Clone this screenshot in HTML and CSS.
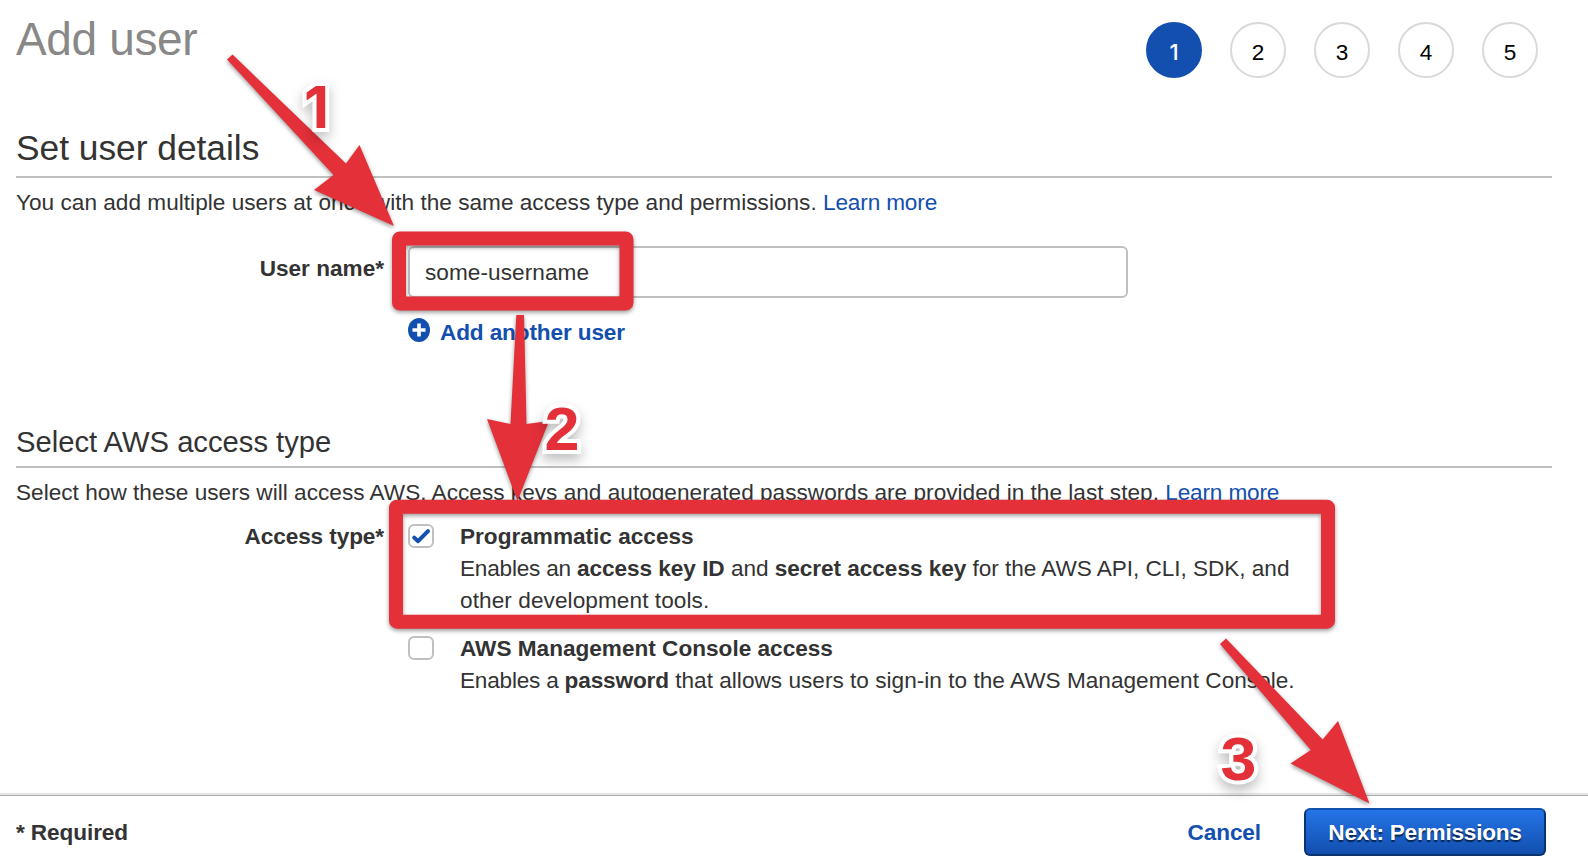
FILE: index.html
```html
<!DOCTYPE html>
<html lang="en">
<head>
<meta charset="utf-8">
<title>Add user</title>
<link rel="stylesheet" href="styles.css">
</head>
<body>
<header class="header">
  <h1 class="title"><span>Add user</span></h1>
  <ol class="steps">
    <li class="step step-active">1</li>
    <li class="step">2</li>
    <li class="step">3</li>
    <li class="step">4</li>
    <li class="step">5</li>
  </ol>
</header>
<main class="content">
  <section class="section">
    <h2 class="heading">Set user details</h2>
    <p class="intro">You can add multiple users at once with the same access type and permissions. <a class="link">Learn more</a></p>
    <div class="row row-user">
      <label class="label label-user" for="username">User name*</label>
      <div>
        <input class="input" id="username" type="text" value="some-username">
        <a class="add">
          <svg class="add-icon" viewBox="0 0 22 24"><ellipse cx="11" cy="12" rx="11" ry="12" fill="#124fae"/><path d="M11 5.5v13M4.5 12h13" stroke="#fff" stroke-width="3.6"/></svg>
          <span>Add another user</span>
        </a>
      </div>
    </div>
  </section>
  <section class="section section-access">
    <h3 class="subheading">Select AWS access type</h3>
    <p class="intro">Select how these users will access AWS. Access keys and autogenerated passwords are provided in the last step. <a class="link">Learn more</a></p>
    <div class="row row-access">
      <span class="label label-access">Access type*</span>
      <div class="options">
        <div class="option">
          <span class="checkbox"><svg class="check" viewBox="0 0 26 24"><path d="M6.2 13.6l3.9 3.6L20 7.2" fill="none" stroke="#124fae" stroke-width="4" stroke-linecap="round" stroke-linejoin="round"/></svg></span>
          <div>
            <div class="option-title">Programmatic access</div>
            <div class="option-text text-prog"><span class="lead">Enables an </span><b>access key ID</b> and <b>secret access key</b> for the AWS API, CLI, SDK, and</div>
            <div class="option-text text-tools">other development tools.</div>
          </div>
        </div>
        <div class="option">
          <span class="checkbox"></span>
          <div>
            <div class="option-title">AWS Management Console access</div>
            <div class="option-text text-console"><span class="lead">Enables a </span><b class="password">password</b> that allows users to sign-in to the AWS Management Console.</div>
          </div>
        </div>
      </div>
    </div>
  </section>
</main>
<footer class="footer">
  <span class="required">* Required</span>
  <a class="cancel">Cancel</a>
  <button class="next" type="button">Next: Permissions</button>
</footer>

<svg class="notes" viewBox="0 0 1588 862">
  <g class="shapes">
    <rect x="399" y="238.5" width="227.5" height="65" rx="1"/>
    <rect x="396" y="506.7" width="932" height="115" rx="1"/>
    <polygon points="227,59.5 232.5,54.5 346,163.5 359.5,145 394,226 314,190 333.5,175"/>
    <polygon points="516.3,315 524,315 526.5,424 549,421 517.5,501 487,419 510.5,424"/>
    <polygon points="1220,644 1226,638.5 1322.7,739.5 1338,721 1369.5,803.5 1290.5,763.5 1310.8,750"/>
  </g>
  <g class="digits">
    <text class="digit-one" x="304" y="128">1</text>
    <text x="544.5" y="450" textLength="35" lengthAdjust="spacingAndGlyphs">2</text>
    <text x="1220.5" y="780" textLength="36" lengthAdjust="spacingAndGlyphs">3</text>
  </g>
</svg>
</body>
</html>
```
FILE: styles.css
```css
* { box-sizing: border-box; }

body {
  margin: 0;
  width: 1588px;
  height: 862px;
  display: flex;
  flex-direction: column;
  position: relative;
  overflow: hidden;
  background: #fff;
  color: #333;
  font: 22.6px/32px "Liberation Sans", Arial, sans-serif;
}

h1, h2, h3, p, ol { margin: 0; padding: 0; font-weight: 400; }

.header {
  display: flex;
  justify-content: space-between;
  height: 126px;
  padding: 0 50px 0 16px;
}

.title {
  padding-top: 11px;
  font-size: 46px;
  letter-spacing: -0.35px;
  line-height: 56px;
  color: #888;
}

.steps {
  display: flex;
  gap: 28px;
  padding-top: 22px;
  list-style: none;
}

.step {
  width: 56px;
  height: 56px;
  padding-top: 1px;
  border: 2px solid #d9d9d9;
  border-radius: 50%;
  color: #000;
  line-height: 56px;
  text-align: center;
}

.step-active {
  padding-top: 0;
  background: #124fae;
  border-color: #124fae;
  color: #fff;
  font-family: Inter, sans-serif;
  font-size: 22px;
  font-weight: 500;
}

.content { flex: 1; padding: 0 36px 0 16px; }

.section { height: 298px; }

.heading {
  padding-bottom: 6px;
  border-bottom: 2px solid #c0c0c0;
  font-size: 35.3px;
  line-height: 44px;
}

.subheading {
  padding-bottom: 6px;
  border-bottom: 2px solid #c0c0c0;
  font-size: 29.2px;
  line-height: 36px;
}

.intro { padding-top: 9px; letter-spacing: 0.02px; white-space: nowrap; }

.link { color: #124fae; letter-spacing: -0.15px; }

.row {
  display: grid;
  grid-template-columns: 368px 1fr;
  column-gap: 24px;
}

.row-user { margin-top: 27px; }
.row-access { margin-top: 12px; }

.label {
  font-weight: 700;
  text-align: right;
  white-space: nowrap;
}

.label-user { padding-top: 7px; }
.label-access { letter-spacing: -0.1px; }

.input {
  display: block;
  width: 720px;
  height: 52px;
  padding: 2px 15px 0;
  border: 2px solid #c0c0c0;
  border-radius: 6px;
  background: #fff;
  color: #333;
  font: inherit;
  letter-spacing: 0.06px;
  outline: none;
}

.add {
  display: flex;
  gap: 10px;
  margin-top: 19px;
  color: #124fae;
  font-weight: 700;
  letter-spacing: -0.13px;
}

.add-icon { width: 22px; height: 24px; margin-top: 1px; }

.options { display: grid; row-gap: 16px; }

.option { display: flex; gap: 26px; white-space: nowrap; }

.option-title { font-weight: 700; }
.text-prog { letter-spacing: -0.04px; }
.text-tools { letter-spacing: 0.08px; }
.text-console { letter-spacing: 0.02px; }
.lead { letter-spacing: -0.22px; }
.password { letter-spacing: -0.15px; }

.checkbox {
  width: 26px;
  height: 24px;
  margin-top: 3px;
  border: 2px solid #c0c0c0;
  border-radius: 6px;
}

.check { display: block; width: 26px; height: 24px; margin: -2px; }

.footer {
  display: flex;
  align-items: flex-start;
  height: 67px;
  padding: 12px 42px 0 16px;
  border-top: 1px solid #aaa;
  box-shadow: 0 -2px 1px #e6e6e6;
  color: #333;
  font-weight: 700;
  letter-spacing: -0.1px;
}

.required { flex: 1; padding-top: 9px; }

.cancel { padding-top: 9px; color: #124fae; margin-right: 43px; }

.next {
  width: 242px;
  height: 48px;
  padding: 1px 0 0;
  border: 2px solid #0b3370;
  border-top-color: #1150ab;
  border-radius: 6px;
  background: linear-gradient(#2574e8, #124fae);
  color: #fff;
  font: inherit;
  letter-spacing: -0.22px;
  text-shadow: 0 2px 1px rgba(0, 0, 0, .6);
  white-space: nowrap;
}

/* Annotation layer drawn over the page */
.notes {
  position: absolute;
  left: 0;
  top: 0;
  width: 1588px;
  height: 862px;
  pointer-events: none;
}

.shapes { filter: drop-shadow(0 2px 2px rgba(0, 0, 0, .4)); }
.shapes rect { fill: none; stroke: #e33039; stroke-width: 14px; stroke-linejoin: round; }
.shapes polygon { fill: #e33039; }

.digits {
  filter: drop-shadow(0 6px 6px rgba(0, 0, 0, .25));
  fill: #e33039;
  stroke: #fff;
  stroke-width: 8px;
  paint-order: stroke;
  font-size: 61px;
  font-weight: 700;
}

.digit-one { font-family: Inter, sans-serif; font-size: 58px; }
```
